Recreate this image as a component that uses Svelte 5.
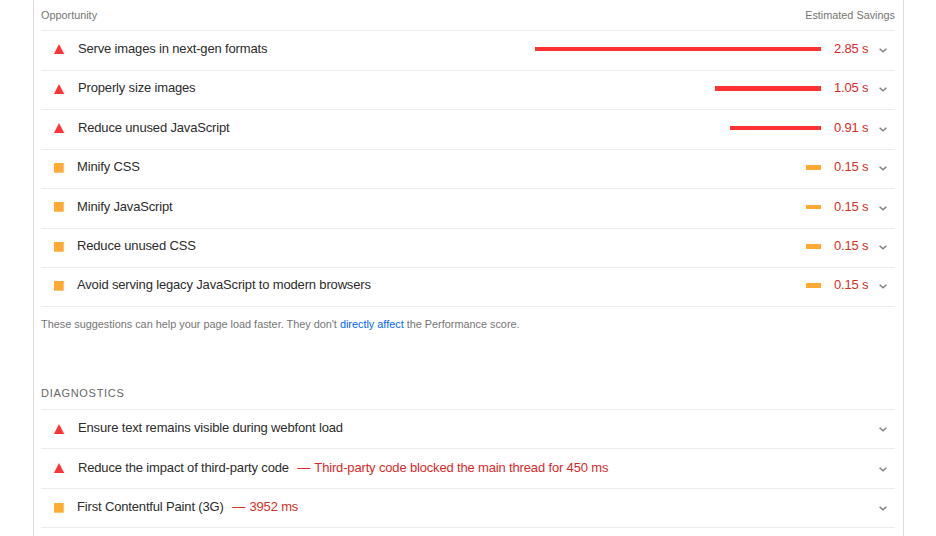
<script>
  const opportunities = [
    { title: 'Serve images in next-gen formats', level: 'fail', savings: '2.85 s', width: 286 },
    { title: 'Properly size images', level: 'fail', savings: '1.05 s', width: 106 },
    { title: 'Reduce unused JavaScript', level: 'fail', savings: '0.91 s', width: 91.5 },
    { title: 'Minify CSS', level: 'average', savings: '0.15 s', width: 15 },
    { title: 'Minify JavaScript', level: 'average', savings: '0.15 s', width: 15 },
    { title: 'Reduce unused CSS', level: 'average', savings: '0.15 s', width: 15 },
    { title: 'Avoid serving legacy JavaScript to modern browsers', level: 'average', savings: '0.15 s', width: 15 },
  ];

  const diagnostics = [
    { title: 'Ensure text remains visible during webfont load', level: 'fail', detail: '' },
    { title: 'Reduce the impact of third-party code', level: 'fail', detail: 'Third-party code blocked the main thread for 450 ms' },
    { title: 'First Contentful Paint (3G)', level: 'average', detail: '3952 ms' },
  ];
</script>

{#snippet marker(level)}
  <svg class="marker" viewBox="0 0 10 10">
    {#if level === 'fail'}
      <path d="M5 0L10.2 10H0z" fill="#f33" />
    {:else}
      <path d="M0 0H9.7V9.7H0z" fill="#fa3" />
    {/if}
  </svg>
{/snippet}

{#snippet chevron()}
  <svg class="chevron" viewBox="0 0 8 5">
    <path d="M0.6 0.7L4 3.8L7.4 0.7" fill="none" stroke="#808080" stroke-width="1.5" />
  </svg>
{/snippet}

<div class="report">
  <section>
    <div class="header">
      <span>Opportunity</span>
      <span>Estimated Savings</span>
    </div>
    {#each opportunities as audit}
      <div class="audit opportunity {audit.level}">
        {@render marker(audit.level)}
        <span class="title">{audit.title}</span>
        <div class="bar" style="width: {audit.width}px"></div>
        <span class="savings">{audit.savings}</span>
        {@render chevron()}
      </div>
    {/each}
    <p class="note">
      These suggestions can help your page load faster. They don't <a href="#score">directly affect</a> the Performance score.
    </p>
  </section>

  <section>
    <h2>Diagnostics</h2>
    {#each diagnostics as audit}
      <div class="audit {audit.level}">
        {@render marker(audit.level)}
        <span class="title">
          {audit.title}
          {#if audit.detail}
            <span class="detail"><span class="dash">—</span> {audit.detail}</span>
          {/if}
        </span>
        {@render chevron()}
      </div>
    {/each}
  </section>
</div>

<style>
  :global(body) {
    margin: 0;
    background: #fff;
  }

  .report {
    box-sizing: border-box;
    width: 871px;
    height: 536px;
    margin-left: 33px;
    padding: 0 8px 0 7px;
    overflow: hidden;
    border-left: 1px solid #dcdcdc;
    border-right: 1px solid #dcdcdc;
    font-family: "Liberation Sans", Arial, sans-serif;
    font-size: 13px;
    letter-spacing: -0.16px;
    color: #2c2c2c;
  }

  .header {
    box-sizing: border-box;
    display: flex;
    justify-content: space-between;
    height: 31.4px;
    border-bottom: 1px solid #ebebeb;
    font-size: 10.85px;
    line-height: 31px;
    letter-spacing: 0;
    color: #757575;
  }

  .audit {
    box-sizing: border-box;
    display: flex;
    align-items: center;
    height: 39.43px;
    padding: 0 8px 0 13px;
    border-bottom: 1px solid #ebebeb;
  }

  .opportunity {
    padding-bottom: 2.4px;
  }

  .marker {
    flex: none;
    width: 10px;
    height: 10px;
    margin-right: 13px;
    overflow: visible;
  }

  .fail .marker {
    margin-right: 14px;
  }

  .title {
    flex: 1;
    padding-bottom: 2px;
    white-space: nowrap;
  }

  .bar {
    height: 4.5px;
    margin-bottom: 0.5px;
    background: #fa3;
  }

  .fail .bar {
    background: #f33;
  }

  .savings {
    width: 35px;
    margin: 0 10px 0 13px;
    padding-bottom: 2px;
    white-space: nowrap;
  }

  .savings,
  .detail {
    color: #d0331c;
  }

  .fail .savings,
  .fail .detail {
    color: #d92a2a;
  }

  .detail {
    margin-left: 5px;
  }

  .dash {
    margin-right: 1px;
  }

  .chevron {
    flex: none;
    width: 8px;
    height: 5px;
    margin-top: 2px;
  }

  .note {
    height: 62.4px;
    margin: 0;
    padding-top: 10px;
    font-size: 10.86px;
    line-height: 14px;
    letter-spacing: 0;
    color: #757575;
  }

  .note a {
    color: #06f;
    text-decoration: none;
  }

  h2 {
    box-sizing: border-box;
    height: 30px;
    margin: 0;
    padding-top: 6px;
    border-bottom: 1px solid #ebebeb;
    font-size: 11px;
    font-weight: normal;
    line-height: 14px;
    letter-spacing: 0.7px;
    text-transform: uppercase;
    color: #666;
  }
</style>
